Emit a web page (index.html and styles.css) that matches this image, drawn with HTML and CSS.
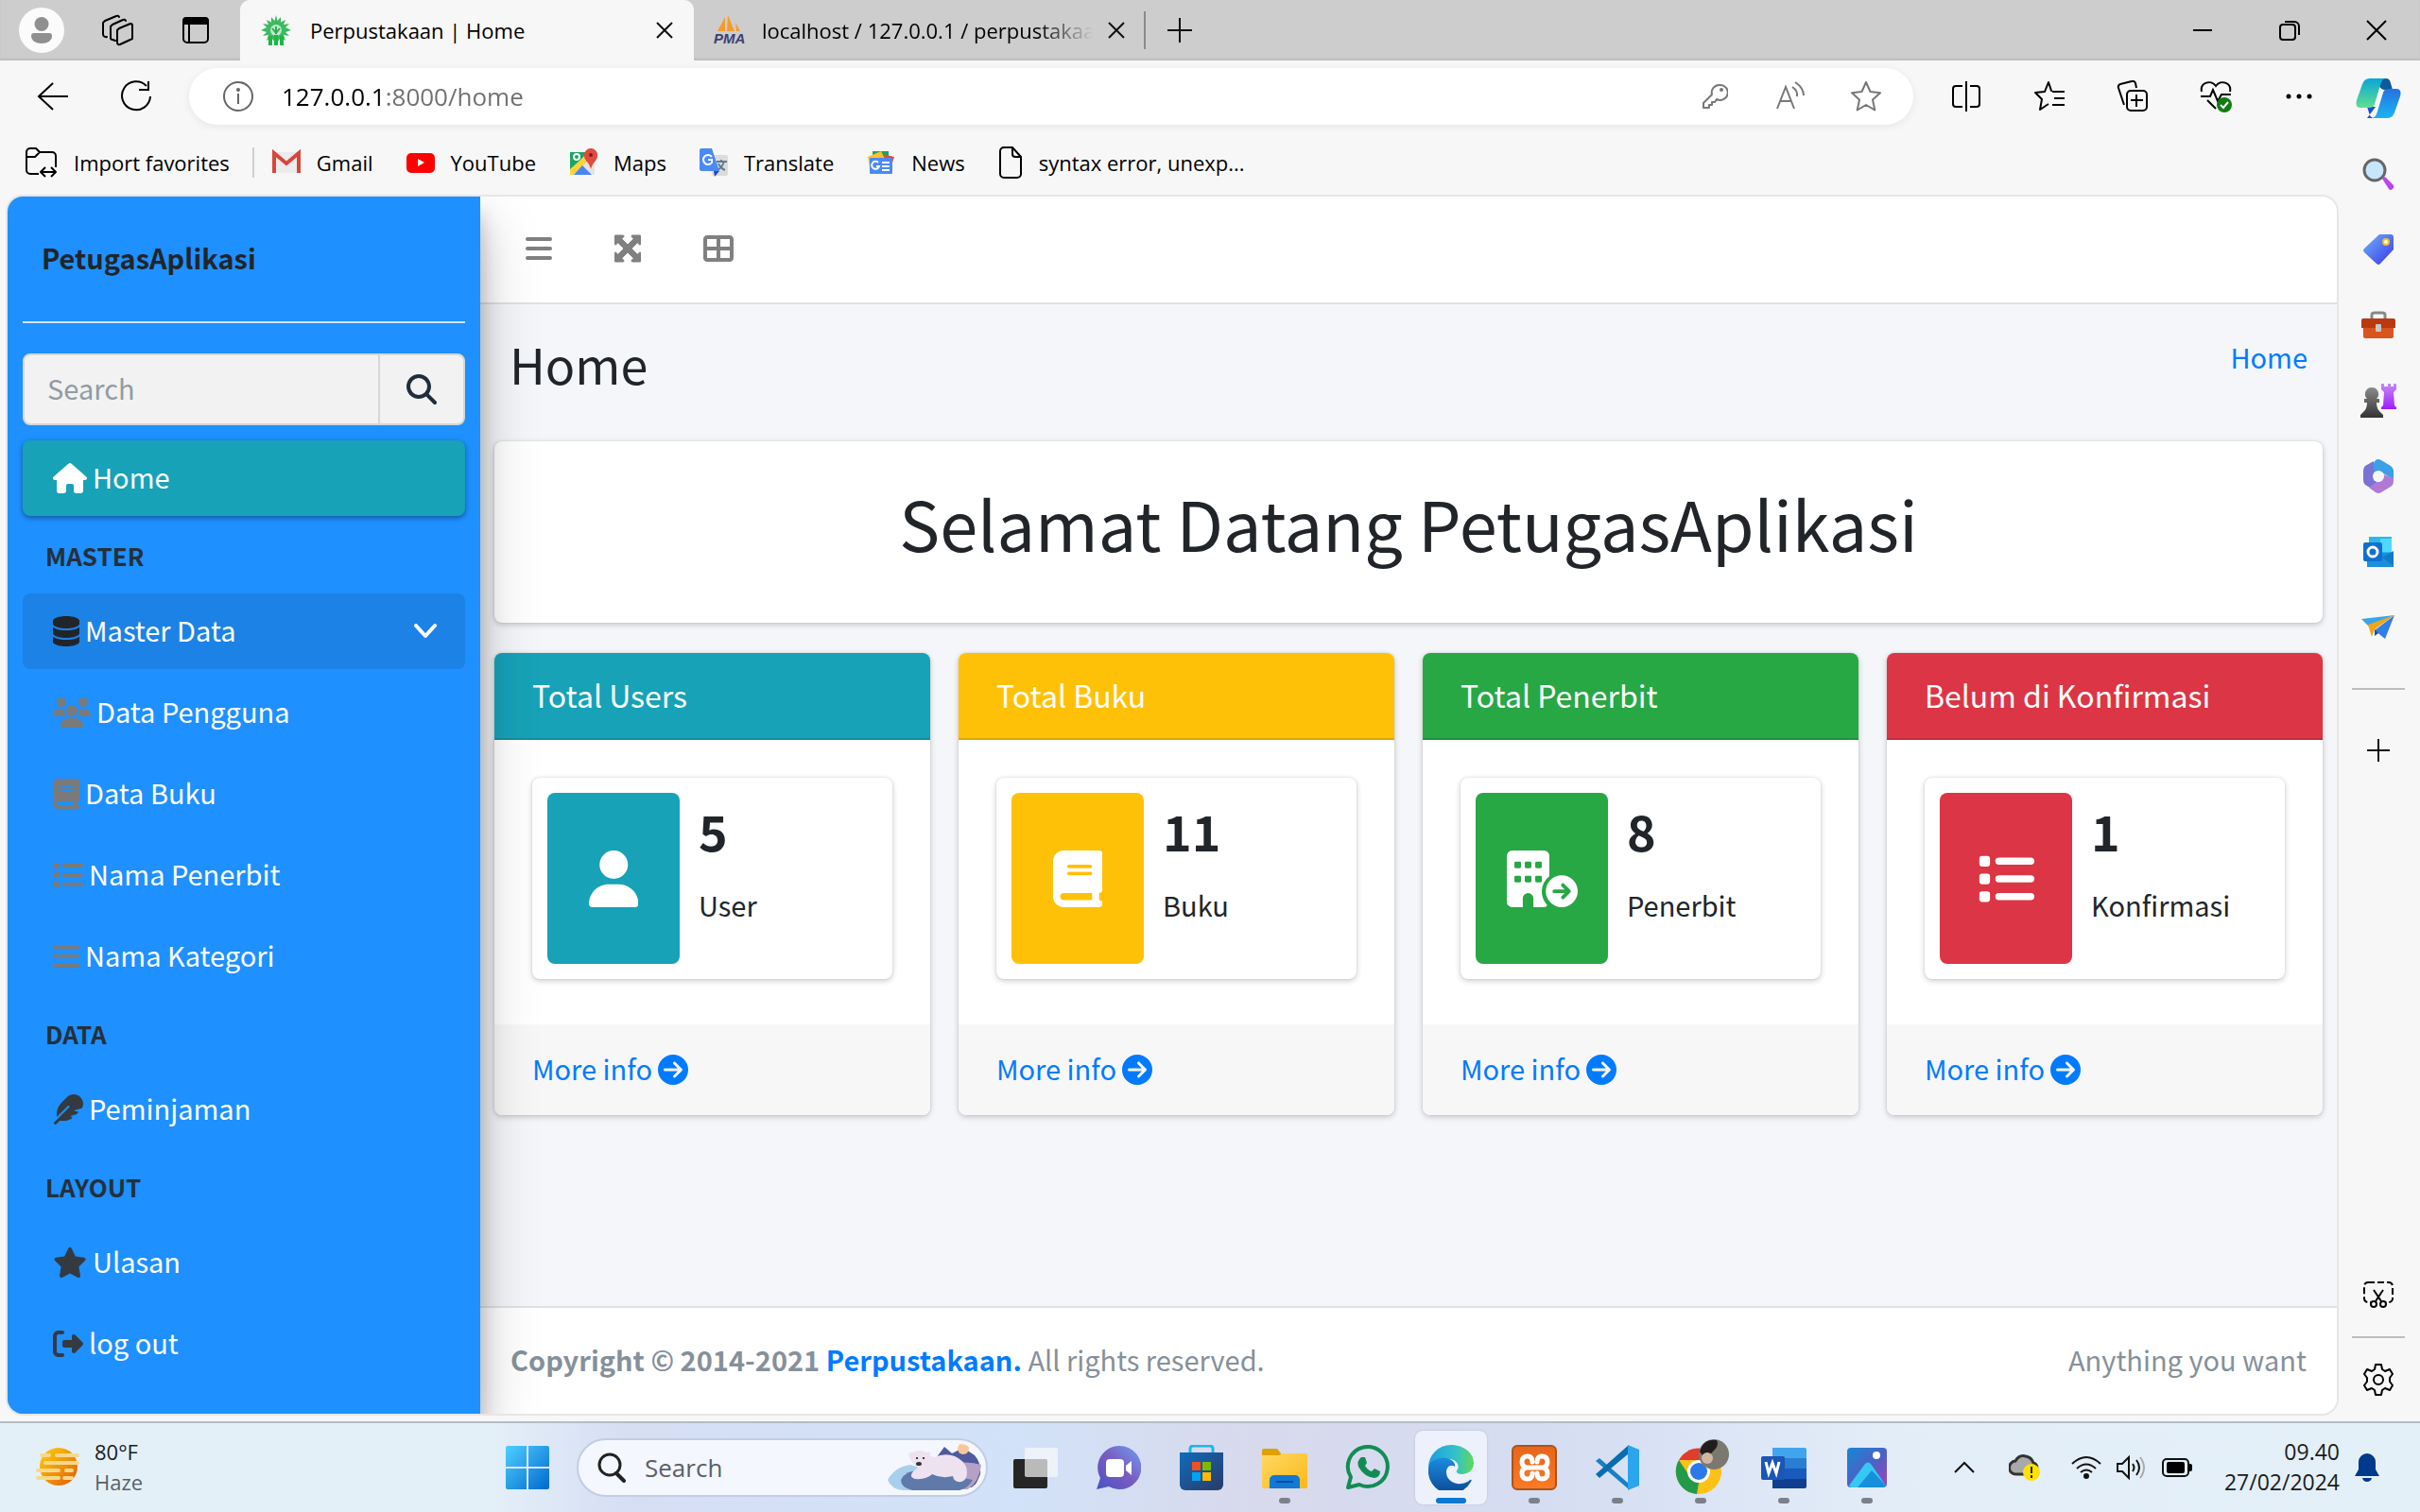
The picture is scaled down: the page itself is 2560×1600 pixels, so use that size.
FILE: index.html
```html
<!DOCTYPE html>
<html lang="id">
<head>
<meta charset="utf-8">
<meta name="viewport" content="width=device-width, initial-scale=1">
<title>Perpustakaan | Home</title>
<link rel="stylesheet" href="styles.css">
</head>
<body>
<svg class="defs" aria-hidden="true">
  <defs>
    <linearGradient id="win" x1="0" y1="0" x2="1" y2="1"><stop offset="0" stop-color="#4fd0ff"/><stop offset="1" stop-color="#0069cf"/></linearGradient>
    <linearGradient id="sun" x1="0" y1="0" x2="1" y2="1"><stop offset="0" stop-color="#ffd20a"/><stop offset="1" stop-color="#e25a08"/></linearGradient>
    <linearGradient id="teal" x1="0" y1="0" x2="0" y2="1"><stop offset="0" stop-color="#0aa5d8"/><stop offset="1" stop-color="#5fe08f"/></linearGradient>
    <linearGradient id="blue" x1="0" y1="0" x2="0" y2="1"><stop offset="0" stop-color="#2473e0"/><stop offset="1" stop-color="#19b4f2"/></linearGradient>
    <linearGradient id="tag" x1="0" y1="0" x2="1" y2="1"><stop offset="0" stop-color="#6fb4ff"/><stop offset="1" stop-color="#3b35e6"/></linearGradient>
    <linearGradient id="chat" x1="0" y1="1" x2="1" y2="0"><stop offset="0" stop-color="#4a52c8"/><stop offset=".5" stop-color="#7a5bc0"/><stop offset="1" stop-color="#6fa0f0"/></linearGradient>
    <linearGradient id="folder" x1="0" y1="0" x2="1" y2="1"><stop offset="0" stop-color="#ffd866"/><stop offset="1" stop-color="#fbb917"/></linearGradient>
    <linearGradient id="store" x1="0" y1="0" x2="1" y2="1"><stop offset="0" stop-color="#0f6cbd"/><stop offset="1" stop-color="#2b3a66"/></linearGradient>
    <linearGradient id="edge" x1="0" y1="0" x2="1" y2="0"><stop offset="0" stop-color="#1b9de2"/><stop offset=".6" stop-color="#35c1c8"/><stop offset="1" stop-color="#5fd95a"/></linearGradient>
    <linearGradient id="edgelow" x1="0" y1="0" x2="0" y2="1"><stop offset="0" stop-color="#1b8ce0"/><stop offset="1" stop-color="#0c4a94"/></linearGradient>
    <linearGradient id="xampp" x1="0" y1="0" x2="0" y2="1"><stop offset="0" stop-color="#e8641a"/><stop offset="1" stop-color="#fb7a24"/></linearGradient>
    <linearGradient id="photo" x1="0" y1="0" x2="1" y2="1"><stop offset="0" stop-color="#1488d8"/><stop offset=".5" stop-color="#4c62c4"/><stop offset="1" stop-color="#9a44b8"/></linearGradient>
    <linearGradient id="rook" x1="0" y1="0" x2="0" y2="1"><stop offset="0" stop-color="#c28bf5"/><stop offset="1" stop-color="#a11bff"/></linearGradient>
    <linearGradient id="pawn" x1="0" y1="0" x2="0" y2="1"><stop offset="0" stop-color="#8b8b8b"/><stop offset="1" stop-color="#333"/></linearGradient>
    <path id="i-bars" d="M32 64H416a32 32 0 0 1 0 64H32a32 32 0 0 1 0-64zM32 224H416a32 32 0 0 1 0 64H32a32 32 0 0 1 0-64zM32 384H416a32 32 0 0 1 0 64H32a32 32 0 0 1 0-64z"/>
    <path id="i-book" fill-rule="evenodd" d="M96 0C43 0 0 43 0 96V416c0 53 43 96 96 96H384h32c17.700 0 32-14.300 32-32s-14.300-32-32-32V384c17.700 0 32-14.300 32-32V32c0-17.700-14.300-32-32-32H384 96zm0 384H352v64H96c-17.700 0-32-14.300-32-32s14.300-32 32-32zm32-240c0-8.800 7.200-16 16-16H336c8.800 0 16 7.200 16 16s-7.200 16-16 16H144c-8.800 0-16-7.200-16-16zm16 48H336c8.800 0 16 7.200 16 16s-7.200 16-16 16H144c-8.800 0-16-7.200-16-16s7.200-16 16-16z"/>
    <path id="i-list" d="M40 48h48a24 24 0 0 1 24 24v48a24 24 0 0 1-24 24H40a24 24 0 0 1-24-24V72a24 24 0 0 1 24-24zM192 64H480a32 32 0 0 1 0 64H192a32 32 0 0 1 0-64zM40 208h48a24 24 0 0 1 24 24v48a24 24 0 0 1-24 24H40a24 24 0 0 1-24-24v-48a24 24 0 0 1 24-24zM192 224H480a32 32 0 0 1 0 64H192a32 32 0 0 1 0-64zM40 368h48a24 24 0 0 1 24 24v48a24 24 0 0 1-24 24H40a24 24 0 0 1-24-24v-48a24 24 0 0 1 24-24zM192 384H480a32 32 0 0 1 0 64H192a32 32 0 0 1 0-64z"/>
    <path id="i-search" fill-rule="evenodd" d="M416 208c0 45.900-14.900 88.300-40 122.700L502.600 457.400c12.500 12.500 12.500 32.800 0 45.300s-32.800 12.500-45.300 0L330.700 376c-34.400 25.200-76.800 40-122.700 40C93.100 416 0 322.900 0 208S93.100 0 208 0S416 93.100 416 208zM208 352a144 144 0 1 0 0-288 144 144 0 1 0 0 288z"/>
    <path id="i-go" fill-rule="evenodd" d="M0 256a256 256 0 1 0 512 0A256 256 0 1 0 0 256zM297 385c-9.400 9.400-24.600 9.400-33.900 0s-9.400-24.600 0-33.900l71-71L120 280c-13.300 0-24-10.700-24-24s10.700-24 24-24l214.100 0-71-71c-9.400-9.400-9.400-24.600 0-33.900s24.600-9.400 33.900 0L409 239c9.400 9.400 9.400 24.600 0 33.900L297 385z"/>
    <path id="i-x" d="M3 3 19 19M19 3 3 19" fill="none" stroke="#111" stroke-width="2"/>
    <path id="i-star-line" d="M17 2 21.500 12 32 13.300 24 20.500 26.300 31.500 17 26 7.700 31.500 10 20.500 2 13.300 12.500 12z" fill="none" stroke-width="2" stroke-linejoin="round"/>
  </defs>
</svg>

<header class="titlebar">
  <div class="window-tools">
    <button class="avatar" aria-label="Profile"><svg viewBox="0 0 48 48" width="48" height="48"><circle cx="24" cy="24" r="24" fill="#fbfbfb"/><circle cx="24" cy="17.500" r="7.500" fill="#8f8f8f"/><path d="M16 27h16a3 3 0 0 1 3 3c0 5-5 8-11 8s-11-3-11-8a3 3 0 0 1 3-3z" fill="#8f8f8f"/></svg></button>
    <button aria-label="Workspaces"><svg viewBox="0 0 34 34" width="34" height="34" fill="none" stroke="#000" stroke-width="2" stroke-linejoin="round" stroke-linecap="round"><path d="M19 15 31 10a2 2 0 0 1 2 2V26L20 32a2 2 0 0 1-3-2V17zM15 28 12 27a2 2 0 0 1-2-2V13l2-2 11-5a2 2 0 0 1 3 1M6 24a3 3 0 0 1-4-3V9l2-2L16 2a2 2 0 0 1 3 1"/></svg></button>
    <button aria-label="Tab actions"><svg viewBox="0 0 30 30" width="30" height="30" fill="none" stroke="#000" stroke-width="2"><rect x="2" y="2" width="26" height="26" rx="4"/><path d="M2 8V5a3 3 0 0 1 3-3h20a3 3 0 0 1 3 3v3z" fill="#000"/><path d="M8 8v20"/></svg></button>
  </div>
  <div class="tab tab-active">
    <svg viewBox="0 0 32 32" width="32" height="32"><path d="M16 0l1.500 6L21 2v5.500L26 5l-2 5 6-1-4 4 6 3-6 2 4 4-6-1 2 6-5-3-5 6-5-6-5 3 2-6-6 1 4-4-6-2 6-3-4-4 6 1-2-5 5 2.500V2l3.500 4z" fill="#3dbb62"/><circle cx="16" cy="16" r="6" fill="#bfe8cb"/><path d="M12 14l4 5 4-5M16 12v8" stroke="#2faa55" stroke-width="2" fill="none"/><path d="M8 22h4v10H8zM14 21h4v11h-4zM20 22h4v10h-4z" fill="#1fb643"/></svg>
    <span class="tab-title">Perpustakaan | Home</span>
    <button aria-label="Close tab"><svg viewBox="0 0 22 22" width="22" height="22"><use href="#i-x"/></svg></button>
  </div>
  <div class="tab tab-idle">
    <svg viewBox="0 0 34 32" width="34" height="32"><path d="M13 2v15H5zM16 0l7 17h-8zM24 8l5 9h-4z" fill="#f79a2a"/><text x="1" y="30" class="pma">PMA</text></svg>
    <span class="tab-title tab-fade">localhost / 127.0.0.1 / perpustakaan</span>
    <button aria-label="Close tab"><svg viewBox="0 0 22 22" width="22" height="22"><use href="#i-x"/></svg></button>
  </div>
  <button class="new-tab" aria-label="New tab"><svg viewBox="0 0 28 28" width="28" height="28"><path d="M14 1v26M1 14h26" stroke="#111" stroke-width="2"/></svg></button>
  <div class="window-buttons">
    <button aria-label="Minimize"><svg viewBox="0 0 22 22" width="22" height="22"><path d="M1 11h20" stroke="#000" stroke-width="2"/></svg></button>
    <button aria-label="Restore"><svg viewBox="0 0 22 22" width="22" height="22" fill="none" stroke="#000" stroke-width="2"><rect x="1" y="5" width="16" height="16" rx="3"/><path d="M6 2h10a5 5 0 0 1 5 5v9"/></svg></button>
    <button aria-label="Close"><svg viewBox="0 0 22 22" width="22" height="22"><path d="M1 1 21 21M21 1 1 21" stroke="#000" stroke-width="2"/></svg></button>
  </div>
</header>

<div class="window">
  <div class="browser">
    <div class="toolbar">
      <button aria-label="Back"><svg viewBox="0 0 34 34" width="34" height="34"><path d="M33 17H2M17 3 2 17 17 31" fill="none" stroke="#000" stroke-width="2"/></svg></button>
      <button aria-label="Refresh"><svg viewBox="0 0 34 34" width="34" height="34"><path d="M28 6A15 15 0 1 0 32 17M30 1v9H20" fill="none" stroke="#000" stroke-width="2"/></svg></button>
      <div class="address">
        <svg viewBox="0 0 32 32" width="32" height="32"><circle cx="16" cy="16" r="15" fill="none" stroke="#666" stroke-width="2"/><path d="M16 13v11" stroke="#666" stroke-width="2"/><circle cx="16" cy="9" r="2" fill="#666"/></svg>
        <input type="text" aria-label="Address" value="127.0.0.1:8000/home">
        <button aria-label="Passwords"><svg viewBox="0 0 28 28" width="28" height="28" fill="none" stroke="#777" stroke-width="2" stroke-linejoin="round"><path d="M19 2a8 8 0 1 1-3 15l-2 3h-3v3H8v3H2v-5l9-9A8 8 0 0 1 19 2z"/><circle cx="21" cy="7" r="1"/></svg></button>
        <button aria-label="Read aloud"><svg viewBox="0 0 32 32" width="32" height="32" fill="none" stroke="#777" stroke-width="2"><path d="M2 29 11 6l9 23M5 21h12M18 6q6 4 5 10M21 1q9 6 9 14"/></svg></button>
        <button aria-label="Favorite"><svg viewBox="0 0 34 34" width="34" height="34" stroke="#777"><use href="#i-star-line"/></svg></button>
      </div>
      <button aria-label="Split screen"><svg viewBox="0 0 32 32" width="32" height="32" fill="none" stroke="#000" stroke-width="2"><path d="M12 5H5a3 3 0 0 0-3 3v16a3 3 0 0 0 3 3h7M20 5h7a3 3 0 0 1 3 3v16a3 3 0 0 1-3 3h-7M16 0v32"/></svg></button>
      <button aria-label="Favorites"><svg viewBox="0 0 34 34" width="34" height="34" fill="none" stroke="#000" stroke-width="2" stroke-linejoin="round"><path d="M20 11h-1L16 2l-4 10-10 1 7 7-2 11 9-6M20 12h13M22 19h11M20 26h13"/></svg></button>
      <button aria-label="Collections"><svg viewBox="0 0 34 34" width="34" height="34" fill="none" stroke="#000" stroke-width="2"><path d="M8 26 2 8a3 3 0 0 1 2-4l12-3a3 3 0 0 1 4 2l1 5"/><rect x="11" y="11" width="21" height="21" rx="4"/><path d="M21 15v13M15 21h13"/></svg></button>
      <button aria-label="Browser essentials"><svg viewBox="0 0 34 34" width="34" height="34" fill="none" stroke="#000" stroke-width="2"><path d="M2 12C0 2 12-1 17 6c5-7 17-4 15 6M1 17h10l3-7 5 12 4-7h10M8 21l9 9"/><circle cx="26" cy="26" r="8" fill="#107c10" stroke="none"/><path d="M22 26l3 3 5-6" stroke="#fff"/></svg></button>
      <button aria-label="Settings and more"><svg viewBox="0 0 28 28" width="28" height="28"><circle cx="3" cy="14" r="2.500"/><circle cx="14" cy="14" r="2.500"/><circle cx="25" cy="14" r="2.500"/></svg></button>
    </div>
    <nav class="bookmarks" aria-label="Favorites bar">
      <a href="#" class="import"><svg viewBox="0 0 34 32" width="34" height="32" fill="none" stroke="#000" stroke-width="2" stroke-linejoin="round"><path d="M14 28H5a4 4 0 0 1-4-4V5a4 4 0 0 1 4-4h6l4 4h13a4 4 0 0 1 4 4v12M1 10h9l5-5M16 26h16M21 21l-5 5 5 5M27 21l5 5-5 5"/></svg>Import favorites</a>
      <a href="#"><svg viewBox="0 0 30 30" width="30" height="30"><path d="M2 4h26v22H2z" fill="#ececec"/><path d="M2 26V5l13 11L28 5v21" fill="none" stroke="#d9463b" stroke-width="4"/></svg>Gmail</a>
      <a href="#"><svg viewBox="0 0 30 30" width="30" height="30"><rect y="5" width="30" height="21" rx="5" fill="#f00"/><path d="M12 11v8l7-4z" fill="#fff"/></svg>YouTube</a>
      <a href="#"><svg viewBox="0 0 30 30" width="30" height="30"><rect x="1" y="4" width="26" height="24" fill="#e3e3e3"/><path d="M1 4h19L1 24z" fill="#1da462"/><path d="M1 22 17 8l4 4L5 28H1z" fill="#ffd43b"/><path d="M5 28 14 18l10 10z" fill="#4a86f2"/><circle cx="8" cy="9" r="3" fill="none" stroke="#fff" stroke-width="2"/><path d="M23 0a7 7 0 0 1 7 8c0 5-5 6-7 14-2-8-7-9-7-14a7 7 0 0 1 7-8z" fill="#e04a3f"/><circle cx="23" cy="7" r="2" fill="#7a1d17"/></svg>Maps</a>
      <a href="#"><svg viewBox="0 0 30 30" width="30" height="30"><rect x="13" y="7" width="17" height="22" rx="2" fill="#dcdcdc"/><path d="M18 14h11M23 12v2M26 14q-2 6-7 9M20 16q2 5 7 7" stroke="#5f7d8c" stroke-width="2" fill="none"/><path d="M2 0h11l8 24H2a2 2 0 0 1-2-2V2a2 2 0 0 1 2-2z" fill="#4a8af4"/><path d="M15 24h6l-5 6z" fill="#2f45b5"/><path d="M13 9a5 5 0 1 0 0 6v-3H9" fill="none" stroke="#fff" stroke-width="2"/></svg>Translate</a>
      <a href="#"><svg viewBox="0 0 30 30" width="30" height="30"><path d="M6 3h17v8H6z" fill="#1da462"/><path d="M1 9 15 3l4 8-16 9z" fill="#fbc02d"/><path d="M17 6l12 3-4 13z" fill="#e5483b"/><rect x="3" y="10" width="24" height="17" rx="1" fill="#4a8af4"/><path d="M12 15a4 4 0 1 0 1 4h-3M16 15h8M16 19h8M16 23h8" stroke="#fff" stroke-width="2" fill="none"/></svg>News</a>
      <a href="#"><svg viewBox="0 0 26 34" width="26" height="34"><path d="M2 5a4 4 0 0 1 4-4h9l9 10v18a4 4 0 0 1-4 4H6a4 4 0 0 1-4-4zM15 1v7a3 3 0 0 0 3 3h6" fill="none" stroke="#000" stroke-width="2"/></svg>syntax error, unexp...</a>
    </nav>

    <div class="page">
      <aside class="sidebar">
        <div class="brand">PetugasAplikasi</div>
        <form class="side-search">
          <input type="search" placeholder="Search" aria-label="Search menu">
          <button type="button" aria-label="Search"><svg viewBox="0 0 512 512" height="32"><use href="#i-search"/></svg></button>
        </form>
        <nav>
          <a href="#" class="link active"><svg viewBox="0 0 576 512" height="32"><path d="M575.800 255.500c0 18-15 32.100-32 32.100h-32l.7 160.200c0 2.700-.2 5.400-.5 8.100V472c0 22.100-17.900 40-40 40H392c-22.100 0-40-17.900-40-40V384c0-17.700-14.300-32-32-32H256c-17.700 0-32 14.300-32 32v88c0 22.100-17.900 40-40 40H104c-22.100 0-40-17.900-40-40V287.600H32c-18 0-32-14-32-32.100c0-9 3-17 10-24L266.400 8c7-7 15-8 22-8s15 2 21 7L564.800 231.500c8 7 12 15 11 24z"/></svg><span>Home</span></a>
          <h2>MASTER</h2>
          <a href="#" class="link open"><svg class="dark" viewBox="0 0 448 512" height="32"><path d="M448 80v48c0 44.200-100.300 80-224 80S0 172.200 0 128V80C0 35.800 100.300 0 224 0S448 35.800 448 80zM393.200 214.700c20.800-7.400 39.900-16.900 54.800-28.600V288c0 44.200-100.300 80-224 80S0 332.200 0 288V186.100c14.900 11.800 34 21.200 54.800 28.600C99.700 230.700 159.500 240 224 240s124.300-9.300 169.200-25.300zM0 346.100c14.900 11.800 34 21.200 54.800 28.600C99.700 390.700 159.500 400 224 400s124.300-9.300 169.200-25.300c20.800-7.400 39.900-16.900 54.800-28.600V432c0 44.200-100.300 80-224 80S0 476.200 0 432V346.100z"/></svg><span>Master Data</span><svg class="chevron" viewBox="0 0 24 16" width="24" height="16"><path d="M2 2 12 13 22 2" fill="none" stroke="#fff" stroke-width="4" stroke-linecap="round" stroke-linejoin="round"/></svg></a>
          <a href="#" class="link"><svg class="grey" viewBox="0 0 640 512" height="32"><path d="M144 0a80 80 0 1 1 0 160A80 80 0 1 1 144 0zM512 0a80 80 0 1 1 0 160A80 80 0 1 1 512 0zM0 298.700C0 239.800 47.800 192 106.700 192h42.700c15.900 0 31 3.500 44.600 9.700c-1.300 7.200-1.900 14.700-1.900 22.300c0 38.200 16.800 72.500 43.300 96H21.300C9.600 320 0 310.400 0 298.700zM404.600 320c26.600-23.500 43.300-57.800 43.300-96c0-7.600-.7-15-1.900-22.300c13.600-6.300 28.700-9.700 44.600-9.700h42.700C592.200 192 640 239.800 640 298.700c0 11.800-9.600 21.300-21.300 21.300H405.300zM224 224a96 96 0 1 1 192 0 96 96 0 1 1 -192 0zM128 485.300C128 411.700 187.700 352 261.300 352H378.700C452.300 352 512 411.700 512 485.300c0 14.700-11.900 26.700-26.700 26.700H154.700c-14.700 0-26.700-11.900-26.700-26.700z"/></svg><span>Data Pengguna</span></a>
          <a href="#" class="link"><svg class="grey" viewBox="0 0 448 512" height="32"><use href="#i-book"/></svg><span>Data Buku</span></a>
          <a href="#" class="link"><svg class="grey" viewBox="0 0 512 512" height="32"><use href="#i-list"/></svg><span>Nama Penerbit</span></a>
          <a href="#" class="link"><svg class="grey" viewBox="0 0 448 512" height="32"><use href="#i-bars"/></svg><span>Nama Kategori</span></a>
          <h2>DATA</h2>
          <a href="#" class="link"><svg class="slate" viewBox="0 0 512 512" height="32"><path d="M278.500 215.600L23 471c-9.400 9.400-9.400 24.600 0 33.900s24.600 9.400 33.900 0l57-57h68c49.700 0 97.900-14.400 139-41c11.100-7.200 5.500-23-7.800-23c-5.100 0-9.200-4.100-9.200-9.200c0-4.100 2.700-7.600 6.500-8.800l81-24.300c2.500-.8 4.800-2.100 6.700-4l22.400-22.400c10.100-10.100 2.900-27.300-11.300-27.300l-32.200 0c-5.100 0-9.200-4.100-9.200-9.200c0-4.100 2.700-7.600 6.500-8.800l112-33.600c4-1.200 7.400-3.900 9.300-7.700C506.400 207.600 512 184.100 512 160c0-41-16.300-80.300-45.300-109.300l-5.500-5.500C432.300 16.300 393 0 352 0s-80.300 16.300-109.300 45.300L139 149C91 197 64 262.100 64 330v55.300L253.600 195.800c6.200-6.200 16.400-6.200 22.600 0c5.400 5.400 6.100 13.600 2.200 19.800z"/></svg><span>Peminjaman</span></a>
          <h2>LAYOUT</h2>
          <a href="#" class="link"><svg class="slate" viewBox="0 0 576 512" height="32"><path d="M316.900 18C311.600 7 300.400 0 288.100 0s-23.400 7-28.800 18L195 150.300 51.400 171.500c-12 1.800-22 10.200-25.700 21.700s-.7 24.200 7.900 32.700L137.800 329 113.200 474.700c-2 12 3 24.200 12.900 31.300s23 8 33.800 2.300l128.300-68.500 128.300 68.500c10.800 5.700 23.900 4.900 33.800-2.300s14.900-19.300 12.900-31.300L438.500 329 542.700 225.900c8.600-8.500 11.700-21.200 7.900-32.700s-13.700-19.900-25.700-21.700L381.200 150.300 316.900 18z"/></svg><span>Ulasan</span></a>
          <a href="#" class="link"><svg class="slate" viewBox="0 0 512 512" height="32"><path d="M160 96c17.700 0 32-14.300 32-32s-14.300-32-32-32H96C43 32 0 75 0 128V384c0 53 43 96 96 96h64c17.700 0 32-14.300 32-32s-14.300-32-32-32H96c-17.700 0-32-14.300-32-32l0-256c0-17.700 14.300-32 32-32h64zM502.600 278.600c12.500-12.500 12.500-32.800 0-45.300l-128-128c-9.200-9.200-22.900-11.900-34.900-6.900s-19.800 16.600-19.800 29.600v64H192c-17.700 0-32 14.300-32 32v64c0 17.700 14.300 32 32 32H320v64c0 12.900 7.800 24.600 19.800 29.600s25.700 2.200 34.900-6.900l128-128z"/></svg><span>log out</span></a>
        </nav>
      </aside>

      <div class="content">
        <div class="navbar">
          <button aria-label="Toggle menu"><svg viewBox="0 0 448 512" height="32"><use href="#i-bars"/></svg></button>
          <button aria-label="Fullscreen"><svg viewBox="0 0 448 512" height="32"><path d="M16 32H144q16 0 16 16 0 6-5 11L124 92l100 100L324 92l-31-33q-5-5-5-11 0-16 16-16H432q16 0 16 16V176q0 16-16 16-6 0-11-5l-33-31L288 256 388 356l33-31q5-5 11-5 16 0 16 16V464q0 16-16 16H304q-16 0-16-16 0-6 5-11l31-33L224 320 124 420l31 33q5 5 5 11 0 16-16 16H16q-16 0-16-16V336q0-16 16-16 6 0 11 5l33 31L160 256 60 156l-33 31q-5 5-11 5-16 0-16-16V48q0-16 16-16z" stroke="#808080" stroke-width="16"/></svg></button>
          <button aria-label="Control panel"><svg viewBox="0 0 512 512" height="32"><path fill-rule="evenodd" d="M448 96V224H288V96H448zm0 192V416H288V288H448zM224 224H64V96H224V224zM64 288H224V416H64V288zM64 32C28.700 32 0 60.700 0 96V416c0 35.300 28.700 64 64 64H448c35.300 0 64-28.700 64-64V96c0-35.300-28.700-64-64-64H64z"/></svg></button>
        </div>
        <main>
          <div class="heading"><h1>Home</h1><a href="#">Home</a></div>
          <section class="card welcome"><p>Selamat Datang PetugasAplikasi</p></section>
          <div class="cards">
            <section class="card info">
              <h3>Total Users</h3>
              <div class="card-body"><div class="box"><span class="box-icon"><svg viewBox="0 0 448 512" height="60"><path d="M224 256A128 128 0 1 0 224 0a128 128 0 1 0 0 256zm-45.700 48C79.800 304 0 383.800 0 482.300C0 498.700 13.300 512 29.700 512H418.300c16.400 0 29.700-13.300 29.700-29.700C448 383.800 368.200 304 269.700 304H178.300z"/></svg></span><div><strong>5</strong><span>User</span></div></div></div>
              <footer><a href="#"><span>More info</span><svg viewBox="0 0 512 512" height="32"><use href="#i-go"/></svg></a></footer>
            </section>
            <section class="card warning">
              <h3>Total Buku</h3>
              <div class="card-body"><div class="box"><span class="box-icon"><svg viewBox="0 0 448 512" height="60"><use href="#i-book"/></svg></span><div><strong>11</strong><span>Buku</span></div></div></div>
              <footer><a href="#"><span>More info</span><svg viewBox="0 0 512 512" height="32"><use href="#i-go"/></svg></a></footer>
            </section>
            <section class="card success">
              <h3>Total Penerbit</h3>
              <div class="card-body"><div class="box"><span class="box-icon"><svg viewBox="0 0 640 512" height="60"><path fill-rule="evenodd" d="M48 0H336a48 48 0 0 1 48 48V232A176 176 0 0 0 365 494q-10 18-29 18H240V432a48 48 0 0 0-96 0v80H48a48 48 0 0 1-48-48V48A48 48 0 0 1 48 0zM80 100a12 12 0 0 0-12 12v36a12 12 0 0 0 12 12h36a12 12 0 0 0 12-12v-36a12 12 0 0 0-12-12zM174 100a12 12 0 0 0-12 12v36a12 12 0 0 0 12 12h36a12 12 0 0 0 12-12v-36a12 12 0 0 0-12-12zM268 100a12 12 0 0 0-12 12v36a12 12 0 0 0 12 12h36a12 12 0 0 0 12-12v-36a12 12 0 0 0-12-12zM80 228a12 12 0 0 0-12 12v36a12 12 0 0 0 12 12h36a12 12 0 0 0 12-12v-36a12 12 0 0 0-12-12zM174 228a12 12 0 0 0-12 12v36a12 12 0 0 0 12 12h36a12 12 0 0 0 12-12v-36a12 12 0 0 0-12-12zM268 228a12 12 0 0 0-12 12v36a12 12 0 0 0 12 12h36a12 12 0 0 0 12-12v-36a12 12 0 0 0-12-12z"/><path d="M496 224a144 144 0 1 0 0 288 144 144 0 1 0 0-288z"/><path class="cut" d="M428 368H560M506 312l56 56-56 56" fill="none" stroke-width="32" stroke-linecap="round" stroke-linejoin="round"/></svg></span><div><strong>8</strong><span>Penerbit</span></div></div></div>
              <footer><a href="#"><span>More info</span><svg viewBox="0 0 512 512" height="32"><use href="#i-go"/></svg></a></footer>
            </section>
            <section class="card danger">
              <h3>Belum di Konfirmasi</h3>
              <div class="card-body"><div class="box"><span class="box-icon"><svg viewBox="0 0 512 512" height="60"><use href="#i-list"/></svg></span><div><strong>1</strong><span>Konfirmasi</span></div></div></div>
              <footer><a href="#"><span>More info</span><svg viewBox="0 0 512 512" height="32"><use href="#i-go"/></svg></a></footer>
            </section>
          </div>
        </main>
        <footer class="page-footer"><p><strong>Copyright © 2014-2021 <a href="#">Perpustakaan.</a></strong> All rights reserved.</p><p>Anything you want</p></footer>
      </div>
    </div>
  </div>

  <aside class="edge-bar">
    <button aria-label="Copilot"><svg viewBox="0 0 48 44" width="48" height="44"><path d="M26 1h6q4 0 5 5l2 7h-8q-5 0-7-6z" fill="#0d5b9a"/><path d="M12 43h8q-5 0-6-6l-2-6h9z" fill="#1b4fd0"/><path d="M15 1H32q-4 0-6 7L20 28q-1 4-6 4H5q-6 0-4-8L7 7q2-6 8-6z" fill="url(#teal)"/><path d="M33 43H17q4 0 6-7l6-20q1-4 6-4h8q6 0 4 8l-6 17q-2 6-8 6z" fill="url(#blue)"/></svg></button>
    <button aria-label="Search"><svg viewBox="0 0 34 34" width="34" height="34"><path d="M21 22l3-2 8 8a2 2 0 0 1-4 5z" fill="#b847ee"/><circle cx="13" cy="13" r="11" fill="#c6e6fb" stroke="#666" stroke-width="3"/></svg></button>
    <button aria-label="Shopping"><svg viewBox="0 0 34 34" width="34" height="34"><path d="M18 1h12a3 3 0 0 1 3 3v13L19 32a3 3 0 0 1-4 0L2 20a3 3 0 0 1 0-4z" fill="url(#tag)"/><circle cx="25" cy="9" r="3" fill="#fff" stroke="#f5c11a" stroke-width="2"/></svg></button>
    <button aria-label="Tools"><svg viewBox="0 0 36 30" width="36" height="30"><path d="M11 9V4q0-2 3-2h8q3 0 3 2v5" fill="none" stroke="#888" stroke-width="3"/><path d="M2 14h32v13a2 2 0 0 1-2 2H4a2 2 0 0 1-2-2z" fill="#d9541e"/><path d="M2 8h32a2 2 0 0 1 2 2v8H0v-8a2 2 0 0 1 2-2z" fill="#b93a10"/><rect x="15" y="14" width="6" height="8" rx="1" fill="#c6c6c6"/></svg></button>
    <button aria-label="Games"><svg viewBox="0 0 38 38" width="38" height="38"><path d="M22 1h3v3h4V1h3v3h3V1h3v6l-3 3 1 14 2 2v2H22v-2l2-2 1-14-3-3z" fill="url(#rook)"/><path d="M12 5a7 7 0 0 1 5 12h3v4h-3q0 7 4 10l3 3v3H0v-3l3-3q4-3 4-10H4v-4h3a7 7 0 0 1 5-12z" fill="url(#pawn)"/></svg></button>
    <button aria-label="Microsoft 365"><svg viewBox="0 0 34 36" width="34" height="36"><path d="M14 1q3-2 6 0l10 6q3 2 3 5v9l-11-6a6 6 0 0 0-10 1V4z" fill="#3aa0e8"/><path d="M12 2v20l4 2-8 6-5-3q-2-2-2-5V12q0-3 2-5z" fill="#7a72d6"/><path d="M33 20v4q0 3-3 5l-10 6q-3 2-6 0l-7-5 9-6a6 6 0 0 0 6-8z" fill="#b07ad4"/><circle cx="17" cy="18" r="6" fill="#f7f7f7"/></svg></button>
    <button aria-label="Outlook"><svg viewBox="0 0 34 34" width="34" height="34"><rect x="7" y="1" width="24" height="20" fill="#28b8ee"/><path d="M19 3h12v14H19z" fill="#4fd8ff"/><path d="M5 18h28v15H5z" fill="#1b8fdc"/><path d="M33 16v16L21 23z" fill="#1479c8"/><rect x="1" y="7" width="20" height="20" rx="2" fill="#0f6fce"/><circle cx="11" cy="17" r="5" fill="none" stroke="#fff" stroke-width="3"/></svg></button>
    <button aria-label="Drop"><svg viewBox="0 0 36 28" width="36" height="28"><path d="M0 5 35 1 8 13z" fill="#35a7ea"/><path d="M35 1 25 26 14 17z" fill="#2f7fe8"/><path d="M7 11 35 1 14 16 11 24z" fill="#f2a516"/><path d="M14 16v7l4-3z" fill="#1750a8"/></svg></button>
    <hr>
    <button aria-label="Customize"><svg viewBox="0 0 26 26" width="26" height="26"><path d="M13 1v24M1 13h24" stroke="#111" stroke-width="2"/></svg></button>
    <button class="push" aria-label="Screenshot"><svg viewBox="0 0 34 30" width="34" height="30" fill="none" stroke="#000" stroke-width="2"><rect x="2" y="2" width="30" height="21" rx="4" stroke-dasharray="7 3"/><path d="M10 22h14v6H10z" fill="#f7f7f7" stroke="none"/><path d="M12 10l8 12M22 10l-8 12"/><circle cx="12" cy="25" r="3" fill="#f7f7f7"/><circle cx="22" cy="25" r="3" fill="#f7f7f7"/></svg></button>
    <hr>
    <button aria-label="Settings"><svg viewBox="0 0 34 34" width="34" height="34" fill="none" stroke="#000" stroke-width="2" stroke-linejoin="round"><path d="M14 1h6l1 5 3 2 5-2 3 5-3 4v4l3 4-3 5-5-2-3 2-1 5h-6l-1-5-3-2-5 2-3-5 3-4v-4L2 11l3-5 5 2 3-2z"/><circle cx="17" cy="17" r="5"/></svg></button>
  </aside>
</div>

<footer class="taskbar">
  <div class="weather">
    <svg viewBox="0 0 46 42" width="46" height="42"><circle cx="24" cy="21" r="20" fill="url(#sun)"/><path d="M6 9h8M22 9h22M10 17h34M2 25h22M32 25h6M2 33h22M30 33h8" stroke="#f8d98a" stroke-width="4" stroke-linecap="round"/></svg>
    <div><span>80°F</span><span class="muted">Haze</span></div>
  </div>
  <button class="start" aria-label="Start"><svg viewBox="0 0 46 46" width="46" height="46"><path d="M2 0h20v22H0V2a2 2 0 0 1 2-2zM24 0h20a2 2 0 0 1 2 2v20H24zM0 24h22v22H2a2 2 0 0 1-2-2zM24 24h22v20a2 2 0 0 1-2 2H24z" fill="url(#win)"/></svg></button>
  <label class="task-search">
    <svg viewBox="0 0 30 32" width="30" height="32"><circle cx="13" cy="13" r="11" fill="none" stroke="#222" stroke-width="3"/><path d="M20 22l8 8" stroke="#222" stroke-width="4" stroke-linecap="round"/></svg>
    <input type="search" placeholder="Search" aria-label="Search Windows">
    <svg class="bear" viewBox="0 0 100 50" width="100" height="50"><path d="M46 22 60 3l8 7L80 4l12 8q7 8 6 20l-6 14H40z" fill="#4f5aa0"/><circle cx="80" cy="5" r="6" fill="#fbc79a"/><path d="M60 22q24-5 39 0-2 18-14 26H60z" fill="#b5a1c4"/><path d="M0 38Q8 24 24 22l20 6v21H16Q4 48 0 38z" fill="#a9cfee"/><path d="M14 38q6-12 26-10l50 10q-5 9-14 11H26q-12-3-12-11z" fill="#5f79aa"/><path d="M23 14q-2-6 3-5 8-4 15 0 5-2 4 3 2 2 4 2 12-5 22-1 13 6 13 17 0 8-6 10-8 1-9-6-12 3-22-2-6 6-18 5-7-2-2-8l5-4q-7-5-9-11z" fill="#eee2f0"/><circle cx="31" cy="15" r="1"/><circle cx="38" cy="15" r="1"/><ellipse cx="33" cy="21" rx="3" ry="2" fill="#333"/></svg>
  </label>
  <div class="apps">
    <button aria-label="Task view"><svg viewBox="0 0 48 48" width="48" height="48"><rect x="1" y="15" width="36" height="31" rx="2" fill="#262626"/><rect x="13" y="3" width="35" height="31" rx="2" fill="#fafafa" fill-opacity=".7"/></svg></button>
    <button aria-label="Chat"><svg viewBox="0 0 48 48" width="48" height="48"><path d="M25 1a23 23 0 1 1-11 43L1 47l4-12A23 23 0 0 1 25 1z" fill="url(#chat)"/><rect x="11" y="15" width="19" height="19" rx="4" fill="#fff"/><path d="M32 22l6-5v15l-6-5z" fill="#fff"/></svg></button>
    <button aria-label="Store"><svg viewBox="0 0 48 48" width="48" height="48"><path d="M12 10V4a3 3 0 0 1 3-3h18a3 3 0 0 1 3 3v6" fill="none" stroke="#1cb5f5" stroke-width="3"/><path d="M1 8h46v34a6 6 0 0 1-6 6H7a6 6 0 0 1-6-6z" fill="url(#store)"/><path d="M14 18h9v9h-9z" fill="#f25022"/><path d="M25 18h9v9h-9z" fill="#7fba00"/><path d="M14 29h9v9h-9z" fill="#00a4ef"/><path d="M25 29h9v9h-9z" fill="#ffb900"/></svg></button>
    <button class="running" aria-label="File Explorer"><svg viewBox="0 0 48 48" width="48" height="48"><path d="M0 6a2 2 0 0 1 2-2h14l4 5v8H0z" fill="#e0a008"/><path d="M0 11h18l4-2h24a2 2 0 0 1 2 2v33a2 2 0 0 1-2 2H2a2 2 0 0 1-2-2z" fill="url(#folder)"/><path d="M8 46V37a5 5 0 0 1 5-5h22a5 5 0 0 1 5 5v9z" fill="#1377d4"/><path d="M15 39h18" stroke="#0b4f9c" stroke-width="2"/></svg></button>
    <button aria-label="WhatsApp"><svg viewBox="0 0 48 48" width="48" height="48"><path d="M3 45 6 34A21 21 0 1 1 15 42z" fill="none" stroke="#128c55" stroke-width="4" stroke-linejoin="round"/><path d="M17 13l4 0 2 6-2 3q3 5 7 6l3-3 6 3q0 6-6 7-11-1-17-12-2-6 3-10z" fill="#128c55"/></svg></button>
    <button class="running current" aria-label="Edge"><svg viewBox="0 0 48 48" width="48" height="48"><path d="M0 24A24 24 0 0 1 24 0c14 0 24 9 24 19 0 8-6 12-13 12-4 0-6-2-5-4 4-4 0-12-8-12C10 14 1 21 0 24z" fill="url(#edge)"/><path d="M0 25C0 17 10 13 18 14c8 1 11 6 10 9-4-3-9 0-9 6 0 8 8 13 16 12q6-1 9-4c2-1 2 1 1 2A24 24 0 0 1 0 25z" fill="url(#edgelow)"/></svg></button>
    <button class="running" aria-label="XAMPP"><svg viewBox="0 0 48 48" width="48" height="48"><rect x="1" y="1" width="46" height="46" rx="5" fill="url(#xampp)" stroke="#a9541c" stroke-width="2"/><path d="M22 18q0-6-5-6-6 0-6 6 0 5 5 6-5 1-5 6 0 6 6 6 5 0 5-6M27 18q0-6 5-6 6 0 6 6 0 5-5 6 5 1 5 6 0 6-6 6-5 0-5-6M16 24h17" fill="none" stroke="#fff" stroke-width="5" stroke-linejoin="round" stroke-linecap="round"/></svg></button>
    <button class="running" aria-label="VS Code"><svg viewBox="0 0 48 48" width="48" height="48"><path d="M1 17l4-3 31 27v6z" fill="#1680c8"/><path d="M1 31l4 4L36 9V0z" fill="#0a6db2"/><path d="M35 0l12 5v38l-12 5z" fill="#2aa5ee"/></svg></button>
    <button class="running" aria-label="Chrome"><svg viewBox="0 0 60 60" width="60" height="60"><circle cx="28" cy="34" r="24" fill="#fbc116"/><path d="M7 22A24 24 0 0 1 49 22H28z" fill="#e33b2e"/><path d="M7 22 19 40l9 6-2 12A24 24 0 0 1 7 22z" fill="#229a48"/><circle cx="28" cy="34" r="12" fill="#fff"/><circle cx="28" cy="34" r="9" fill="#2b78e8"/><circle cx="44" cy="16" r="16" fill="#7b7870"/><path d="M29 13q4-14 18-12 3 6-4 12l-8 8z" fill="#221d1d"/><circle cx="37" cy="20" r="6" fill="#d3b5a3"/></svg></button>
    <button class="running" aria-label="Word"><svg viewBox="0 0 48 48" width="48" height="48"><path d="M12 3h34a2 2 0 0 1 2 2v9H12z" fill="#41a5ee"/><path d="M12 14h36v11H12z" fill="#2b7cd3"/><path d="M12 25h36v11H12z" fill="#185abd"/><path d="M12 36h36v8a2 2 0 0 1-2 2H12z" fill="#103f91"/><rect y="12" width="25" height="25" rx="2" fill="#1b56b5"/><path d="M5 18l3 12 4-11 4 11 3-12" fill="none" stroke="#fff" stroke-width="3"/></svg></button>
    <button class="running" aria-label="Photos"><svg viewBox="0 0 48 48" width="48" height="48"><rect x="3" y="3" width="42" height="42" rx="4" fill="url(#photo)"/><path d="M5 43 22 20q3-3 6 0L44 43q-1 2-3 2H8q-2 0-3-2z" fill="#35c8f2"/><path d="M14 45 29 27l15 16q-1 2-3 2z" fill="#1690dc"/><circle cx="34" cy="11" r="4" fill="#fff"/></svg></button>
  </div>
  <div class="tray">
    <svg viewBox="0 0 22 14" width="22" height="14"><path d="M1 12 11 2l10 10" fill="none" stroke="#111" stroke-width="2"/></svg>
    <svg viewBox="0 0 34 30" width="34" height="30"><path d="M8 22a7 7 0 0 1-1-14Q11 1 18 3q6 1 8 7 4 1 4 6l-8 6z" fill="#a9a9a9" stroke="#333" stroke-width="3"/><circle cx="24" cy="20" r="9" fill="#ffe100"/><path d="M24 14v7M24 23v3" stroke="#222" stroke-width="2"/></svg>
    <svg viewBox="0 0 32 26" width="32" height="26" fill="none" stroke="#111" stroke-width="2"><path d="M1 9q15-14 30 0M6 14q10-9 20 0M10 18q6-5 12 0"/><circle cx="16" cy="22" r="2" fill="#111"/></svg>
    <svg viewBox="0 0 32 26" width="32" height="26" fill="none" stroke="#111" stroke-width="2"><path d="M1 9h5l7-7v22l-7-7H1zM17 9q3 4 0 8M21 5q6 8 0 16"/><path d="M25 2q8 11 0 22" stroke="#aaa"/></svg>
    <svg viewBox="0 0 32 20" width="32" height="20"><rect x="1" y="1" width="27" height="18" rx="4" fill="none" stroke="#111" stroke-width="2"/><rect x="5" y="4" width="19" height="12" rx="2"/><path d="M29 6h1q2 0 2 2v4q0 2-2 2h-1z"/></svg>
    <time datetime="2024-02-27T09:40">09.40<br>27/02/2024</time>
    <svg viewBox="0 0 26 32" width="26" height="32" fill="#003a8c"><path d="M13 1a9 9 0 0 1 9 9v8l4 7H0l4-7v-8a9 9 0 0 1 9-9zM8 27h10q-1 4-5 4t-5-4z"/></svg>
  </div>
</footer>
</body>
</html>
```

FILE: styles.css
```css
* { box-sizing: border-box; }

body {
  margin: 0;
  min-height: 100vh;
  display: flex;
  flex-direction: column;
  background: #f7f7f7;
  color: #000;
  font: 22px/32px "Open Sans", "Noto Sans", sans-serif;
}

h1, h2, h3, p { margin: 0; font-weight: 400; }
a { color: inherit; text-decoration: none; }
svg { display: block; flex: none; }

button {
  display: flex;
  align-items: center;
  justify-content: center;
  padding: 0;
  border: 0;
  background: none;
  color: inherit;
  font: inherit;
}

input {
  min-width: 0;
  padding: 0;
  border: 0;
  outline: 0;
  background: none;
  font: inherit;
}

.defs { position: absolute; width: 0; height: 0; }

/* Window title bar and tabs */
.titlebar {
  display: flex;
  height: 64px;
  background: #cdcdcd;
  box-shadow: inset 0 -2px 2px #bdbdbd;
}

.window-tools { display: grid; grid-template-columns: 88px 72px 94px; }

.tab { display: flex; align-items: center; }
.tab-active { width: 480px; padding: 0 20px 0 22px; border-radius: 10px 10px 0 0; background: #f7f7f7; }
.tab-idle { width: 476px; padding: 0 18px 0 20px; }
.tab svg { margin-right: 20px; }
.tab-idle svg { margin-right: 18px; }
.tab button svg { margin: 0; }
.tab-title { flex: 1; min-width: 0; overflow: hidden; white-space: nowrap; }

.tab-fade {
  margin-right: 14px;
  -webkit-mask-image: linear-gradient(to left, transparent, #000 60px);
  mask-image: linear-gradient(to left, transparent, #000 60px);
}

.pma { font: italic 700 15px "Liberation Sans", sans-serif; fill: #3c3f73; }

.new-tab {
  width: 74px;
  height: 40px;
  align-self: center;
  border-left: 2px solid #8a8a8a;
}

.window-buttons { display: grid; grid-template-columns: repeat(3, 92px); margin-left: auto; }

/* Toolbar and favorites bar */
.window { flex: 1; display: grid; grid-template-columns: 1fr 88px; }
.browser { display: flex; flex-direction: column; min-width: 0; padding: 0 0 8px 8px; }

.toolbar { display: flex; align-items: center; height: 76px; margin-right: -4px; padding-left: 4px; }
.toolbar > button { width: 88px; }

.address {
  flex: 1;
  display: flex;
  align-items: center;
  height: 60px;
  margin: 0 12px;
  padding-left: 36px;
  border-radius: 30px;
  background: #fff;
  box-shadow: 0 2px 10px rgba(0, 0, 0, .07);
}

.address input {
  flex: 1;
  margin-left: 30px;
  font-size: 26px;
  line-height: 36px;
  color: transparent;
  background: linear-gradient(to right, #000 106px, #6f6f6f 106px);
  -webkit-background-clip: text;
  background-clip: text;
}

.address button { width: 80px; }
.address button:last-child { margin-right: 10px; }

.bookmarks { display: flex; align-items: center; gap: 35px; height: 68px; padding: 0 19px 4px; }
.bookmarks a { display: flex; align-items: center; gap: 17px; white-space: nowrap; }
.bookmarks .import { padding-right: 24px; margin-right: -16px; border-right: 2px solid #d0d0d0; }

/* Web page */
.page {
  flex: 1;
  display: grid;
  grid-template-columns: 500px 1fr;
  overflow: hidden;
  border-radius: 16px;
  box-shadow: 0 0 0 2px #e6e6e6;
  background: #f4f6f9;
  color: #212529;
  font: 29px/44px "Noto Sans CJK SC", "Source Sans Pro", sans-serif;
}

.sidebar {
  position: relative;
  z-index: 1;
  padding: 0 16px 16px;
  background: #1e90ff;
  box-shadow: 0 28px 56px rgba(0, 0, 0, .25), 0 20px 20px rgba(0, 0, 0, .22);
}

.brand {
  height: 134px;
  padding: 42px 20px 0;
  border-bottom: 2px solid #d5e5f8;
  font-weight: 700;
}

.side-search {
  display: flex;
  height: 76px;
  margin: 32px 0 16px;
  border: 2px solid #d6d6d6;
  border-radius: 8px;
  background: #f2f2f2;
}

.side-search input { flex: 1; padding: 0 24px 4px; }
.side-search button { width: 90px; border-left: 2px solid #d6d6d6; fill: #1f2d3d; }
.side-search input::placeholder { color: #939ba2; opacity: 1; }

.link {
  display: flex;
  align-items: center;
  gap: 6px;
  height: 80px;
  margin-bottom: 6px;
  padding: 0 30px 0 32px;
  border-radius: 8px;
  color: #fff;
  fill: #fff;
}

.link span, .card footer span { padding-bottom: 4px; }
.link.active { background: #17a2b8; box-shadow: 0 2px 6px rgba(0, 0, 0, .24), 0 2px 4px rgba(0, 0, 0, .2); }
.link.open { background: #1c82e6; }
.link .dark { fill: #212529; }
.link .grey { fill: #7a7a7a; }
.link .slate { fill: #343a40; }
.link .chevron { margin-left: auto; }

.sidebar h2 {
  display: flex;
  align-items: center;
  height: 76px;
  padding: 0 24px 4px;
  color: #25303a;
  font-size: 26px;
  font-weight: 700;
}

.content { display: flex; flex-direction: column; min-width: 0; }

.navbar {
  display: flex;
  align-items: center;
  gap: 66px;
  height: 114px;
  padding: 0 48px 2px;
  border-bottom: 2px solid #dee2e6;
  background: #fff;
  fill: #808080;
}

main { flex: 1; padding: 0 15px; }

.heading {
  display: flex;
  justify-content: space-between;
  height: 145px;
  padding: 27px 16px 0;
}

.heading h1 { font-size: 52px; line-height: 72px; }
.heading a { line-height: 56px; }
.heading a, .card footer a, .page-footer a { color: #007bff; fill: #007bff; }

.card {
  border-radius: 8px;
  background: #fff;
  box-shadow: 0 0 2px rgba(0, 0, 0, .13), 0 2px 6px rgba(0, 0, 0, .2);
}

.welcome { height: 192px; margin-bottom: 32px; padding-top: 32px; text-align: center; font-size: 72px; line-height: 108px; }

.cards { display: grid; grid-template-columns: repeat(4, 1fr); gap: 30px; }

.card h3 {
  height: 92px;
  padding: 0 40px;
  border-bottom: 2px solid rgba(0, 0, 0, .13);
  border-radius: 8px 8px 0 0;
  background: var(--tone);
  color: #fff;
  font-size: 32px;
  line-height: 88px;
}

.info { --tone: #17a2b8; }
.warning { --tone: #ffc107; }
.success { --tone: #28a745; }
.danger { --tone: #dc3545; }

.card-body { padding: 40px 40px 48px; }

.box {
  display: grid;
  grid-template-columns: 140px 1fr;
  gap: 20px;
  padding: 16px;
  border-radius: 8px;
  box-shadow: 0 0 2px rgba(0, 0, 0, .13), 0 2px 6px rgba(0, 0, 0, .2);
}

.box-icon {
  display: grid;
  place-items: center;
  height: 181px;
  border-radius: 8px;
  background: var(--tone);
  fill: #fff;
}

.cut { stroke: var(--tone); }

.box strong { display: block; margin-top: 4px; font-size: 52px; line-height: 72px; }
.box div span { display: block; margin-top: 20px; }

.card footer { display: flex; height: 96px; padding: 0 40px; border-radius: 0 0 8px 8px; background: #f7f7f7; }
.card footer a { display: flex; align-items: center; gap: 6px; }

.page-footer {
  display: flex;
  align-items: center;
  justify-content: space-between;
  height: 114px;
  padding: 0 32px 4px;
  border-top: 2px solid #dee2e6;
  background: #fff;
  color: #869099;
}

/* Browser side bar */
.edge-bar { display: flex; flex-direction: column; align-items: center; padding-bottom: 4px; }
.edge-bar button { width: 80px; height: 80px; }
.edge-bar hr { width: 56px; height: 2px; margin: 24px 0; border: 0; background: #bdbdbd; }
.edge-bar .push { margin-top: auto; }
.edge-bar .push + hr { margin: 4px 0; }

/* Desktop taskbar */
.taskbar {
  display: flex;
  align-items: center;
  height: 96px;
  border-top: 2px solid #b4bcc8;
  background: linear-gradient(to right, #e4f0f8 0, #e4f0f8 20%, #d6def4 26%, #d2e2f8 42%, #d8d9ec 52%, #d5ddf2 64%, #e2edf8 78%, #e4f0f8 100%);
  color: #1b1b1b;
}

.weather { display: flex; align-items: center; gap: 16px; width: 535px; padding: 0 0 2px 38px; }
.weather span { display: block; }
.muted { color: #5a5f66; }
.start { margin-right: 29px; }

.task-search {
  display: flex;
  align-items: center;
  width: 435px;
  height: 62px;
  padding: 0 4px 0 20px;
  border: 2px solid #c2cde2;
  border-radius: 31px;
  background: #f4f7fd;
  font-size: 26px;
}

.task-search input { flex: 1; margin-left: 20px; }
.task-search input::placeholder { color: #5c5f66; opacity: 1; }
.bear { border-radius: 0 25px 25px 0; }

.apps { display: grid; grid-template-columns: repeat(11, 76px); gap: 12px; margin-left: 12px; }
.apps button { position: relative; height: 78px; border-radius: 8px; }
.apps .current { background: #edf1fb; box-shadow: 0 0 2px #aab4cc; }

.running::after {
  content: "";
  position: absolute;
  bottom: 1px;
  width: 12px;
  height: 6px;
  border-radius: 3px;
  background: #7c808a;
}

.current::after { width: 32px; background: #0a78d4; }

.tray { display: flex; align-items: center; gap: 16px; margin-left: auto; padding-right: 43px; }
.tray svg:first-child { margin-right: 20px; }
.tray svg:nth-child(2) { margin-right: 16px; }
.tray time { margin-left: 18px; padding-bottom: 2px; font-size: 23px; text-align: right; }
```
